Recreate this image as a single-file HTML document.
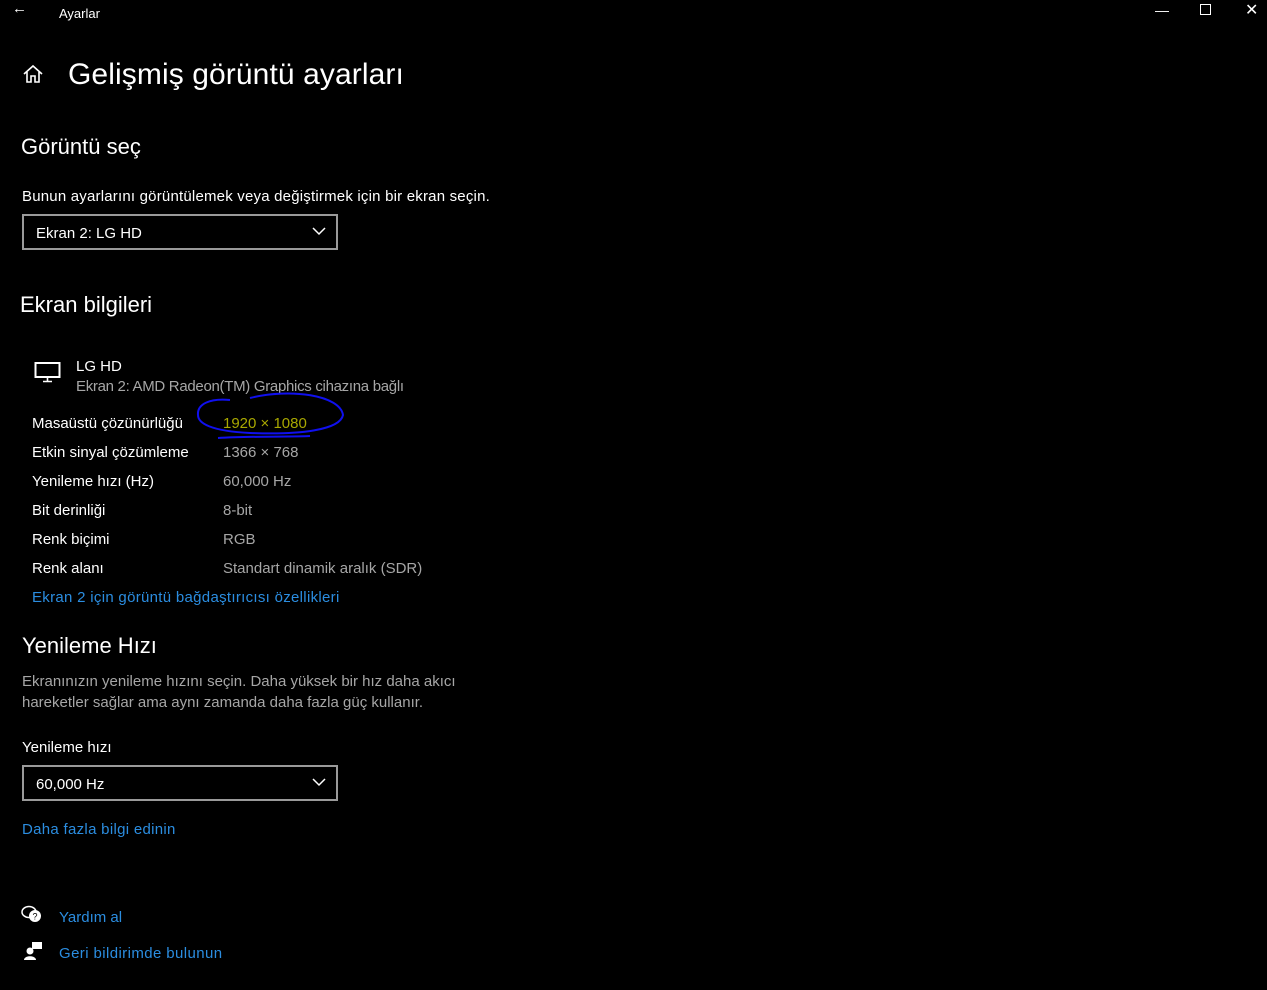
<!DOCTYPE html>
<html><head><meta charset="utf-8"><style>
body{margin:0;width:1267px;height:990px;background:#000;color:#fff;font-family:"Liberation Sans",sans-serif;position:relative;overflow:hidden}
.a{position:absolute;white-space:nowrap}
.g{color:#a6a6a6}
.l{color:#2b8de0}
.box{position:absolute;border:2px solid #9a9a9a;width:312px;height:32px;box-sizing:content-box}
.box span{position:absolute;left:12px;top:9px;font-size:15px}
.box svg{position:absolute;right:10px;top:11px}
</style></head><body>
<div class="a" style="left:12px;top:0px;font-size:15px">←</div>
<div class="a" style="left:59px;top:6px;font-size:13px">Ayarlar</div>
<div class="a" style="left:1155px;top:2px;font-size:14px">—</div>
<div class="a" style="left:1200px;top:4px;width:9px;height:9px;border:1px solid #fff"></div>
<div class="a" style="left:1245px;top:0px;font-size:16px">✕</div>
<svg class="a" style="left:22px;top:63px" width="22" height="22" viewBox="0 0 22 22"><path d="M2 11 L11 3 L20 11 M5 9 V19 H9 V13 H13 V19 H17 V9" fill="none" stroke="#fff" stroke-width="1.6"/></svg>
<div class="a" style="left:68px;top:58px;font-size:30px;letter-spacing:0.1px">Gelişmiş görüntü ayarları</div>
<div class="a" style="left:21px;top:134px;font-size:22px">Görüntü seç</div>
<div class="a" style="left:22px;top:188px;font-size:15px;letter-spacing:0.2px">Bunun ayarlarını görüntülemek veya değiştirmek için bir ekran seçin.</div>
<div class="box" style="left:22px;top:214px"><span>Ekran 2: LG HD</span><svg width="14" height="9"><path d="M1 1 L7 7 L13 1" stroke="#fff" fill="none" stroke-width="1.5"/></svg></div>
<div class="a" style="left:20px;top:292px;font-size:22px">Ekran bilgileri</div>
<svg class="a" style="left:34px;top:361px" width="28" height="22"><rect x="1.5" y="2" width="24" height="14" fill="none" stroke="#fff" stroke-width="2"/><path d="M13.5 16 V20 M9 20.5 H18" stroke="#fff" stroke-width="1.6"/></svg>
<div class="a" style="left:76px;top:358px;font-size:15px">LG HD</div>
<div class="a g" style="left:76px;top:378px;font-size:15px;letter-spacing:-0.3px">Ekran 2: AMD Radeon(TM) Graphics cihazına bağlı</div>
<div class="a" style="left:32px;top:409px;font-size:15px;line-height:29px">Masaüstü çözünürlüğü<br>Etkin sinyal çözümleme<br>Yenileme hızı (Hz)<br>Bit derinliği<br>Renk biçimi<br>Renk alanı</div>
<div class="a g" style="left:223px;top:409px;font-size:15px;line-height:29px"><span style="color:#a9a800">1920 × 1080</span><br>1366 × 768<br>60,000 Hz<br>8-bit<br>RGB<br>Standart dinamik aralık (SDR)</div>
<svg class="a" style="left:190px;top:390px" width="160" height="52"><path d="M60 8 C100 -2 150 5 153 25 C150 40 110 45 60 43 C20 41 8 33 8 25 C7 14 20 8 40 10 M28 48 C60 46 100 47 120 46" fill="none" stroke="#1010ee" stroke-width="2"/></svg>
<div class="a l" style="left:32px;top:589px;font-size:15px;letter-spacing:0.3px">Ekran 2 için görüntü bağdaştırıcısı özellikleri</div>
<div class="a" style="left:22px;top:633px;font-size:22px">Yenileme Hızı</div>
<div class="a g" style="left:22px;top:671px;font-size:15px;line-height:21px">Ekranınızın yenileme hızını seçin. Daha yüksek bir hız daha akıcı<br>hareketler sağlar ama aynı zamanda daha fazla güç kullanır.</div>
<div class="a" style="left:22px;top:739px;font-size:15px">Yenileme hızı</div>
<div class="box" style="left:22px;top:765px"><span>60,000 Hz</span><svg width="14" height="9"><path d="M1 1 L7 7 L13 1" stroke="#fff" fill="none" stroke-width="1.5"/></svg></div>
<div class="a l" style="left:22px;top:821px;font-size:15px;letter-spacing:0.3px">Daha fazla bilgi edinin</div>
<svg class="a" style="left:21px;top:905px" width="22" height="20"><ellipse cx="8" cy="7" rx="7" ry="5.5" fill="none" stroke="#fff" stroke-width="1.5"/><circle cx="14" cy="11" r="6" fill="#fff"/><text x="11.5" y="14.5" font-size="9" fill="#000" font-family="Liberation Sans">?</text></svg>
<div class="a l" style="left:59px;top:909px;font-size:15px">Yardım al</div>
<svg class="a" style="left:23px;top:941px" width="20" height="20"><rect x="9" y="1" width="10" height="7" fill="#fff"/><circle cx="7" cy="10" r="3.5" fill="#fff"/><path d="M1 19 C1 14 13 14 13 19Z" fill="#fff"/></svg>
<div class="a l" style="left:59px;top:945px;font-size:15px;letter-spacing:0.4px">Geri bildirimde bulunun</div>
</body></html>
